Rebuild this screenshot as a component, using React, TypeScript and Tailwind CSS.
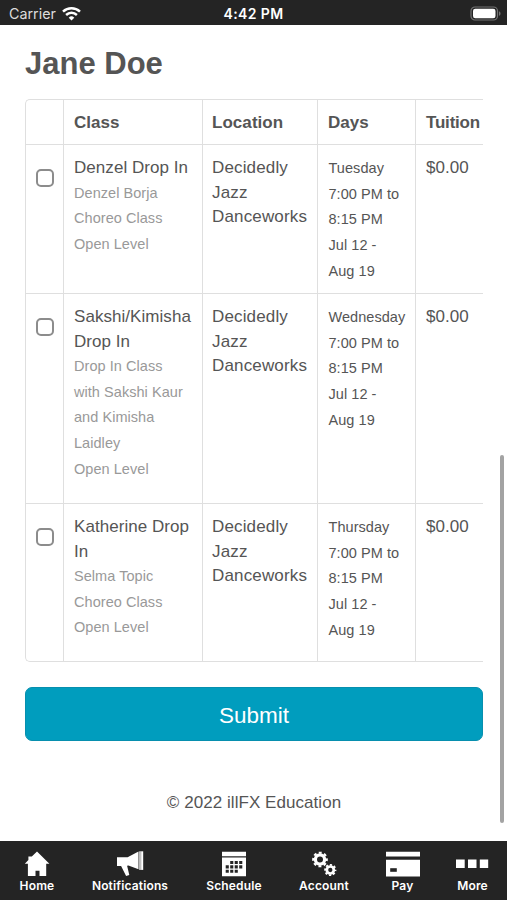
import React, { useState } from 'react';

interface ClassRow {
  name: string[];
  details: string[];
  days: string[];
  height: string;
}

const rows: ClassRow[] = [
  {
    name: ['Denzel Drop In'],
    details: ['Denzel Borja', 'Choreo Class', 'Open Level'],
    days: ['Tuesday', '7:00 PM to', '8:15 PM', 'Jul 12 -', 'Aug 19'],
    height: 'h-[149px] border-b',
  },
  {
    name: ['Sakshi/Kimisha', 'Drop In'],
    details: ['Drop In Class', 'with Sakshi Kaur', 'and Kimisha', 'Laidley', 'Open Level'],
    days: ['Wednesday', '7:00 PM to', '8:15 PM', 'Jul 12 -', 'Aug 19'],
    height: 'h-[210px] border-b',
  },
  {
    name: ['Katherine Drop', 'In'],
    details: ['Selma Topic', 'Choreo Class', 'Open Level'],
    days: ['Thursday', '7:00 PM to', '8:15 PM', 'Jul 12 -', 'Aug 19'],
    height: 'h-[157px]',
  },
];

const columns = 'grid grid-cols-[38px_139px_115px_98px_100px] border-[#dfdfdf]';
const cell = 'border-r border-[#dfdfdf] pl-[10px] pt-[11px] whitespace-nowrap';
const locationCell = 'border-r border-[#dfdfdf] pl-[9px] pt-[11px] whitespace-nowrap';

const Lines = ({ items, className }: { items: string[]; className: string }) => (
  <>
    {items.map((line) => (
      <div key={line} className={className}>{line}</div>
    ))}
  </>
);

const StatusBar = () => (
  <header className="grid h-[25px] shrink-0 grid-cols-3 items-center bg-[#242424] pb-px pl-[9px] pr-[6px] text-white">
    <div className="flex items-center gap-[6px] pt-[3px]">
      <span className="font-['Inter',sans-serif] text-[14.3px] leading-5 text-[#dcdcdc]">Carrier</span>
      <svg width="19" height="14" viewBox="0 0 19 14" fill="none" stroke="#fff" strokeWidth="2.5">
        <path d="M1 4.7C5.8.2 13.2.2 18 4.7" />
        <path d="M4.1 8C7.2 5.1 11.8 5.1 14.9 8" />
        <path d="M9.5 13.5 6.7 10.7a4 4 0 0 1 5.6 0z" fill="#fff" stroke="none" />
      </svg>
    </div>
    <div className="pr-[3px] pt-[3px] text-center font-['Inter',sans-serif] text-[14px] font-semibold leading-5 tracking-[0.4px]">4:42 PM</div>
    <svg className="mt-[3px] justify-self-end" width="31" height="15" viewBox="0 0 31 15">
      <rect x="1" y="1" width="26.5" height="13" rx="4" fill="none" stroke="#737373" strokeWidth="1.2" />
      <rect x="3" y="2.8" width="22.5" height="9.4" rx="2.3" fill="#fff" />
      <path d="M29 5.2c2 .8 2 3.8 0 4.6z" fill="#737373" />
    </svg>
  </header>
);

const HomeIcon = () => (
  <svg width="26" height="26" viewBox="0 0 26 26" fill="#fff">
    <path d="M13 .5 25.4 12.8H22.2V25h-6.7v-5.3h-4V25H3.9V12.8H.8L4.4 8.9V5.4h3.4z" />
  </svg>
);

const MegaphoneIcon = () => (
  <svg width="28" height="26" viewBox="0 0 28 26" fill="#fff">
    <path d="M1 6.2h10.6L22.5.6v17.6L12.4 14.6l-1.3.2 2.2 9.3-3.2.8-5-10H1z" />
    <path d="M23.3.3h3.9v18.6h-3.9z" />
    <path d="M24.8.3v18.6" stroke="#242424" strokeWidth=".4" />
  </svg>
);

const CalendarIcon = () => (
  <svg width="26" height="26" viewBox="0 0 26 26">
    <path d="M1 .7h24v4.5H1zM1 6.5h24v18.8H1z" fill="#fff" />
    <g fill="#242424">
      <path d="M9.2 9.9h3.1V13H9.2zM13.7 9.9h3.1V13h-3.1zM18.2 9.9h3.1V13h-3.1z" />
      <path d="M4.7 14.3h3.1v3.1H4.7zM9.2 14.3h3.1v3.1H9.2zM13.7 14.3h3.1v3.1h-3.1zM18.2 14.3h3.1v3.1h-3.1z" />
      <path d="M4.7 18.7h3.1v3.1H4.7zM9.2 18.7h3.1v3.1H9.2zM13.7 18.7h3.1v3.1h-3.1z" />
    </g>
  </svg>
);

const GearsIcon = () => (
  <svg width="26" height="26" viewBox="0 0 26 26" fill="none" stroke="#fff">
    <circle cx="9" cy="8.5" r="4.6" strokeWidth="3.2" />
    <circle cx="9" cy="8.5" r="6.8" strokeWidth="2.1" strokeDasharray="2.9 2.44" strokeDashoffset="1.45" />
    <circle cx="19.3" cy="19" r="3.5" strokeWidth="2.7" />
    <circle cx="19.3" cy="19" r="5.2" strokeWidth="1.8" strokeDasharray="2.2 1.884" strokeDashoffset="1.1" />
  </svg>
);

const CardIcon = () => (
  <svg width="34" height="26" viewBox="0 0 34 26">
    <path d="M0 .7h34v4.9H0zM0 8.8h34v16.7H0z" fill="#fff" />
    <path d="M4.2 17.2h6.6v3.6H4.2z" fill="#242424" />
  </svg>
);

const MoreIcon = () => (
  <svg width="34" height="26" viewBox="0 0 34 26" fill="#fff">
    <path d="M0 8.4h8.7v8.7H0zM12 8.4h8.5v8.7H12zM23.8 8.4h8.4v8.7h-8.4z" />
  </svg>
);

const tabs = [
  { label: 'Home', icon: <HomeIcon />, width: 'w-[74px]' },
  { label: 'Notifications', icon: <MegaphoneIcon />, width: 'w-[112px]' },
  { label: 'Schedule', icon: <CalendarIcon />, width: 'w-[96px]' },
  { label: 'Account', icon: <GearsIcon />, width: 'w-[84px]' },
  { label: 'Pay', icon: <CardIcon />, width: 'w-[73px]' },
  { label: 'More', icon: <MoreIcon />, width: 'w-[67px]' },
];

export default function App() {
  const [selected, setSelected] = useState<string[]>([]);

  const toggle = (name: string) => {
    setSelected((prev) => (prev.includes(name) ? prev.filter((n) => n !== name) : [...prev, name]));
  };

  return (
    <div className="relative flex h-[900px] w-[507px] flex-col overflow-hidden bg-white font-['Liberation_Sans',Arial,sans-serif] text-[#555]">
      <StatusBar />

      <main className="flex-1 px-[25px] pr-[24px]">
        <h1 className="pt-[19px] text-[31px] font-bold leading-[40px]">Jane Doe</h1>

        <div className="mt-[15px] overflow-hidden rounded-l-[5px] border-y border-l border-[#dfdfdf] text-[17px] leading-[24.5px] tracking-[0.05px]">
          <div className={`${columns} h-[45px] border-b font-bold`}>
            <div className={cell} />
            <div className={cell}>Class</div>
            <div className={locationCell}>Location</div>
            <div className={cell}>Days</div>
            <div className="pl-[10px] pt-[11px] tracking-[-0.2px]">Tuition</div>
          </div>
          {rows.map((row) => (
            <div key={row.name[0]} className={`${columns} ${row.height}`}>
              <div className={cell}>
                <input
                  type="checkbox"
                  aria-label={row.name.join(' ')}
                  checked={selected.includes(row.name[0])}
                  onChange={() => toggle(row.name[0])}
                  className="mt-[13px] block size-[18px] appearance-none rounded-[5px] border-2 border-[#8c8c8c] bg-white checked:bg-[#009dbe]"
                />
              </div>
              <div className={cell}>
                <Lines items={row.name} className="" />
                <Lines items={row.details} className="text-[14.5px] leading-[25.7px] text-[#999]" />
              </div>
              <div className={locationCell}>
                <Lines items={['Decidedly', 'Jazz', 'Danceworks']} className="tracking-[0.15px]" />
              </div>
              <div className={cell}>
                <Lines items={row.days} className="pl-[0.5px] text-[14.5px] leading-[25.7px]" />
              </div>
              <div className="pl-[10px] pt-[11px]">$0.00</div>
            </div>
          ))}
        </div>

        <button className="mt-[25px] h-[54px] w-full rounded-[7px] border border-[#078fae] bg-[#009dbe] pt-[3px] text-[22.5px] text-white">
          Submit
        </button>

        <footer className="mt-[50px] text-center text-[17px] leading-6 tracking-[0.05px]">© 2022 illFX Education</footer>
      </main>

      {/* Scroll indicator */}
      <div className="absolute right-[3px] top-[455px] h-[368px] w-1 rounded-full bg-[#a3a3a3]" />

      <nav className="flex h-[59px] shrink-0 bg-[#242424] font-['Inter',sans-serif] text-[12px] font-semibold tracking-[0.15px] text-white">
        {tabs.map((tab) => (
          <a key={tab.label} className={`flex shrink-0 flex-col items-center pt-[10px] ${tab.width}`}>
            {tab.icon}
            <span className="leading-[17px]">{tab.label}</span>
          </a>
        ))}
      </nav>
    </div>
  );
}
